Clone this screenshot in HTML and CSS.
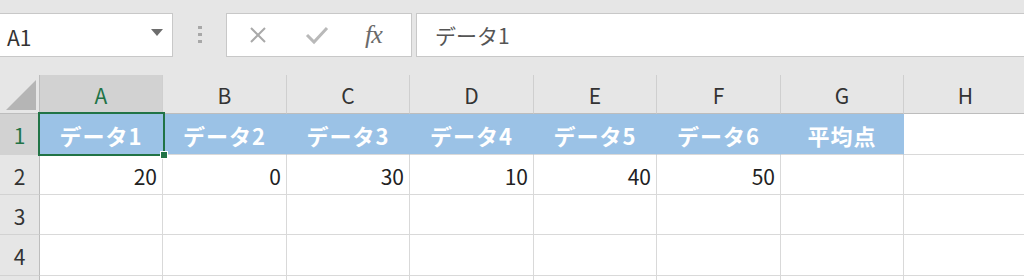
FILE: index.html
```html
<!DOCTYPE html>
<html lang="ja">
<head>
<meta charset="utf-8">
<link rel="stylesheet" href="styles.css">
</head>
<body>
<div class="app">
  <div class="toolbar">
    <div class="namebox">
      <span class="name">A1</span>
      <svg class="caret" width="12" height="7" viewBox="0 0 12 7"><path d="M0 0H12L6 7Z" fill="#6d6d6d"/></svg>
    </div>
    <div class="grip">
      <svg width="6" height="18" viewBox="0 0 6 18"><rect x="1" y="0" width="4" height="3" fill="#a8a8a8"/><rect x="1" y="7" width="4" height="3" fill="#a8a8a8"/><rect x="1" y="14" width="4" height="3" fill="#a8a8a8"/></svg>
    </div>
    <div class="fbtns">
      <svg class="btn" width="20" height="20" viewBox="0 0 20 20"><path d="M3 3L17 17M17 3L3 17" stroke="#a9a9a9" stroke-width="2" fill="none"/></svg>
      <svg class="btn" width="24" height="20" viewBox="0 0 24 20"><path d="M2 10L9 17L22 3" stroke="#b9b9b9" stroke-width="3" fill="none"/></svg>
      <span class="fx">fx</span>
    </div>
    <div class="finput">データ1</div>
  </div>
  <div class="sheet">
    <div class="corner"><svg width="30" height="30" viewBox="0 0 30 30"><path d="M30 0V30H0Z" fill="#b5b5b5"/></svg></div>
    <div class="ch sel">A</div>
    <div class="ch">B</div>
    <div class="ch">C</div>
    <div class="ch">D</div>
    <div class="ch">E</div>
    <div class="ch">F</div>
    <div class="ch">G</div>
    <div class="ch">H</div>

    <div class="rh sel">1</div>
    <div class="c head">データ1</div>
    <div class="c head">データ2</div>
    <div class="c head">データ3</div>
    <div class="c head">データ4</div>
    <div class="c head">データ5</div>
    <div class="c head">データ6</div>
    <div class="c head">平均点</div>
    <div class="c"></div>

    <div class="rh">2</div>
    <div class="c num">20</div>
    <div class="c num">0</div>
    <div class="c num">30</div>
    <div class="c num">10</div>
    <div class="c num">40</div>
    <div class="c num">50</div>
    <div class="c"></div>
    <div class="c"></div>

    <div class="rh">3</div>
    <div class="c"></div><div class="c"></div><div class="c"></div><div class="c"></div>
    <div class="c"></div><div class="c"></div><div class="c"></div><div class="c"></div>

    <div class="rh">4</div>
    <div class="c"></div><div class="c"></div><div class="c"></div><div class="c"></div>
    <div class="c"></div><div class="c"></div><div class="c"></div><div class="c"></div>

    <div class="rh"></div>
    <div class="c"></div><div class="c"></div><div class="c"></div><div class="c"></div>
    <div class="c"></div><div class="c"></div><div class="c"></div><div class="c"></div>

    <div class="selbox"><span class="handle"></span></div>
  </div>
</div>
</body>
</html>
```

FILE: styles.css
```css
* { box-sizing: border-box; }
html, body { margin: 0; padding: 0; }
body {
  background: #e6e6e6;
  font-family: "Noto Sans CJK JP", "Noto Sans", sans-serif;
  width: 1024px;
  height: 280px;
  overflow: hidden;
}
.app { width: 1024px; }
.toolbar {
  height: 75px;
  display: flex;
  align-items: flex-start;
  padding-top: 13px;
  background: #e6e6e6;
}
.namebox {
  width: 173px;
  height: 44px;
  background: #fff;
  border: 1px solid #c8c8c8;
  border-left: none;
  display: flex;
  align-items: center;
  justify-content: space-between;
  padding: 0 9px 0 7px;
}
.name { font-size: 21px; color: #333; line-height: 1; margin-top: 4px; }
.caret { margin-bottom: 6px; }
.grip {
  width: 53px;
  height: 44px;
  display: flex;
  align-items: center;
  justify-content: center;
}
.fbtns {
  width: 186px;
  height: 44px;
  background: #fff;
  border: 1px solid #c8c8c8;
  display: flex;
  align-items: center;
  padding-left: 21px;
}
.fbtns .btn:nth-child(1) { margin-right: 37px; }
.fbtns .btn:nth-child(2) { margin-right: 36px; }
.fx {
  font-family: "Liberation Serif", "DejaVu Serif", serif;
  font-style: italic;
  font-size: 26px;
  color: #6a6a6a;
  line-height: 1;
  letter-spacing: -1px;
}
.finput {
  flex: 1;
  margin-left: 4px;
  height: 44px;
  background: #fff;
  border: 1px solid #c8c8c8;
  border-right: none;
  padding-left: 18px;
  display: flex;
  align-items: center;
  font-size: 21px;
  color: #555;
}
.sheet {
  position: relative;
  display: grid;
  grid-template-columns: 40px 123px 124px 123px 124px 123px 124px 123px 124px;
  grid-template-rows: 39px 41px 40px 40px 41px 5px;
  background: #fff;
}
.corner {
  background: #e6e6e6;
  border-right: 1px solid #bdbdbd;
  border-bottom: 1px solid #bdbdbd;
  display: flex;
  align-items: flex-end;
  justify-content: flex-end;
  padding: 0 3px 3px 0;
}
.ch {
  background: #e6e6e6;
  border-right: 1px solid #cfcfcf;
  border-bottom: 1px solid #bdbdbd;
  display: flex;
  align-items: center;
  justify-content: center;
  font-size: 21px;
  color: #333;
  padding-top: 2px;
}
.ch.sel { background: #d2d2d2; color: #217346; }
.rh {
  background: #e6e6e6;
  border-right: 1px solid #bdbdbd;
  border-bottom: 1px solid #d2d2d2;
  display: flex;
  align-items: center;
  justify-content: center;
  font-size: 21px;
  color: #333;
  padding-top: 2px;
}
.rh.sel { background: #d2d2d2; color: #217346; }
.c {
  border-right: 1px solid #d9d9d9;
  border-bottom: 1px solid #d9d9d9;
  font-size: 21px;
  color: #222;
  display: flex;
  align-items: center;
}
.c.head {
  background: #9bc2e6;
  border-right-color: #9bc2e6;
  border-bottom-color: #d9d9d9;
  color: #fff;
  font-weight: bold;
  font-size: 22px;
  justify-content: center;
  letter-spacing: 1px;
  padding-top: 2px;
}
.c.num { justify-content: flex-end; padding-right: 5px; padding-top: 2px; }
.selbox {
  position: absolute;
  left: 38px;
  top: 37px;
  width: 127px;
  height: 44px;
  border: 2px solid #217346;
  pointer-events: none;
}
.handle {
  position: absolute;
  right: -5px;
  bottom: -5px;
  width: 8px;
  height: 8px;
  background: #217346;
  border: 1px solid #fff;
}
```
